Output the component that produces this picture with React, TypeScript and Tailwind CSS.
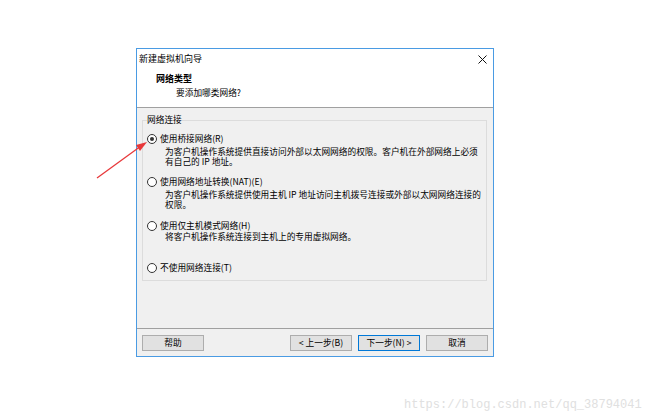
import React from "react";

const font = { fontFamily: '"Noto Sans CJK SC", "Noto Sans", sans-serif' } as React.CSSProperties;

function Radio({ checked }: { checked?: boolean }) {
  return (
    <span className="relative inline-flex h-[10px] w-[10px] shrink-0 items-center justify-center rounded-full border border-[#333333] bg-white">
      {checked && <span className="h-[4px] w-[4px] rounded-full bg-[#333333]" />}
    </span>
  );
}

function Btn({ children, primary }: { children: React.ReactNode; primary?: boolean }) {
  return (
    <div
      className={
        "flex h-[16px] w-[62px] items-center justify-center bg-[#e1e1e1] text-[8.7px] leading-none text-black border " +
        (primary ? "border-[#0078d7]" : "border-[#adadad]")
      }
    >
      {children}
    </div>
  );
}

export default function App() {
  return (
    <div className="relative h-[420px] w-[650px] overflow-hidden bg-white" style={font}>
      <div className="ml-[136px] pt-[48px]">
        <div className="flex h-[309px] w-[358px] flex-col border border-[#4a9be3] bg-[#f0f0f0]">
          {/* title bar */}
          <div className="flex h-[18px] items-center justify-between bg-white pl-[2px] pr-[6px] text-[9px] leading-none text-black">
            <span>新建虚拟机向导</span>
            <svg width="9" height="9" viewBox="0 0 9 9" className="mt-[2px]">
              <path d="M0.5 0.5 L8.5 8.5 M8.5 0.5 L0.5 8.5" stroke="#111" strokeWidth="1" />
            </svg>
          </div>
          {/* header */}
          <div className="h-[41px] border-b border-[#a0a0a0] bg-white pl-[19px] pt-[6px]">
            <div className="text-[9px] font-bold leading-[12px] text-black">网络类型</div>
            <div className="mt-[2px] pl-[20px] text-[8.7px] leading-[12px] text-black">要添加哪类网络?</div>
          </div>
          {/* content */}
          <div className="flex-1 pt-[6px]">
            <fieldset className="ml-[5px] mr-[6px] h-[167px] border border-[#dcdcdc]">
              <legend className="ml-[4px] text-[8.7px] leading-[12px] text-black">网络连接</legend>
              <div className="pl-[4px] text-[8.7px] text-black">
                <div className="mt-[7px] flex h-[12px] items-center gap-[3px]">
                  <Radio checked />
                  <span>使用桥接网络(R)</span>
                </div>
                <div className="ml-[18px] mt-[1.5px] whitespace-nowrap leading-[10px]">
                  为客户机操作系统提供直接访问外部以太网网络的权限。客户机在外部网络上必须
                  <br />
                  有自己的 IP 地址。
                </div>
                <div className="mt-[9px] flex h-[12px] items-center gap-[3px]">
                  <Radio />
                  <span>使用网络地址转换(NAT)(E)</span>
                </div>
                <div className="ml-[18px] mt-[2px] whitespace-nowrap leading-[10px]">
                  为客户机操作系统提供使用主机 IP 地址访问主机拨号连接或外部以太网网络连接的
                  <br />
                  权限。
                </div>
                <div className="mt-[10px] flex h-[12px] items-center gap-[3px]">
                  <Radio />
                  <span>使用仅主机模式网络(H)</span>
                </div>
                <div className="ml-[18px] whitespace-nowrap leading-[10px]">
                  将客户机操作系统连接到主机上的专用虚拟网络。
                </div>
                <div className="mt-[20px] flex h-[12px] items-center gap-[3px]">
                  <Radio />
                  <span>不使用网络连接(T)</span>
                </div>
              </div>
            </fieldset>
          </div>
          {/* footer */}
          <div className="flex h-[28px] items-start justify-between border-t border-[#a0a0a0] px-[5px] pt-[6px]">
            <Btn>帮助</Btn>
            <div className="flex gap-[6px]">
              <Btn>&lt; 上一步(B)</Btn>
              <Btn primary>下一步(N) &gt;</Btn>
              <Btn>取消</Btn>
            </div>
          </div>
        </div>
      </div>

      {/* red annotation arrow */}
      <svg className="absolute left-0 top-0" width="650" height="420" viewBox="0 0 650 420">
        <line x1="97" y1="178" x2="141" y2="146" stroke="#e8383a" strokeWidth="1.3" />
        <polygon points="147,142 136,145 140,151" fill="#e8383a" />
      </svg>

      {/* watermark */}
      <div
        className="absolute left-[404px] top-[397px] text-[12px] leading-[16px] text-[#e0e0e0]"
        style={{ fontFamily: '"Liberation Mono", monospace' }}
      >
        https://blog.csdn.net/qq_38794041
      </div>
    </div>
  );
}
